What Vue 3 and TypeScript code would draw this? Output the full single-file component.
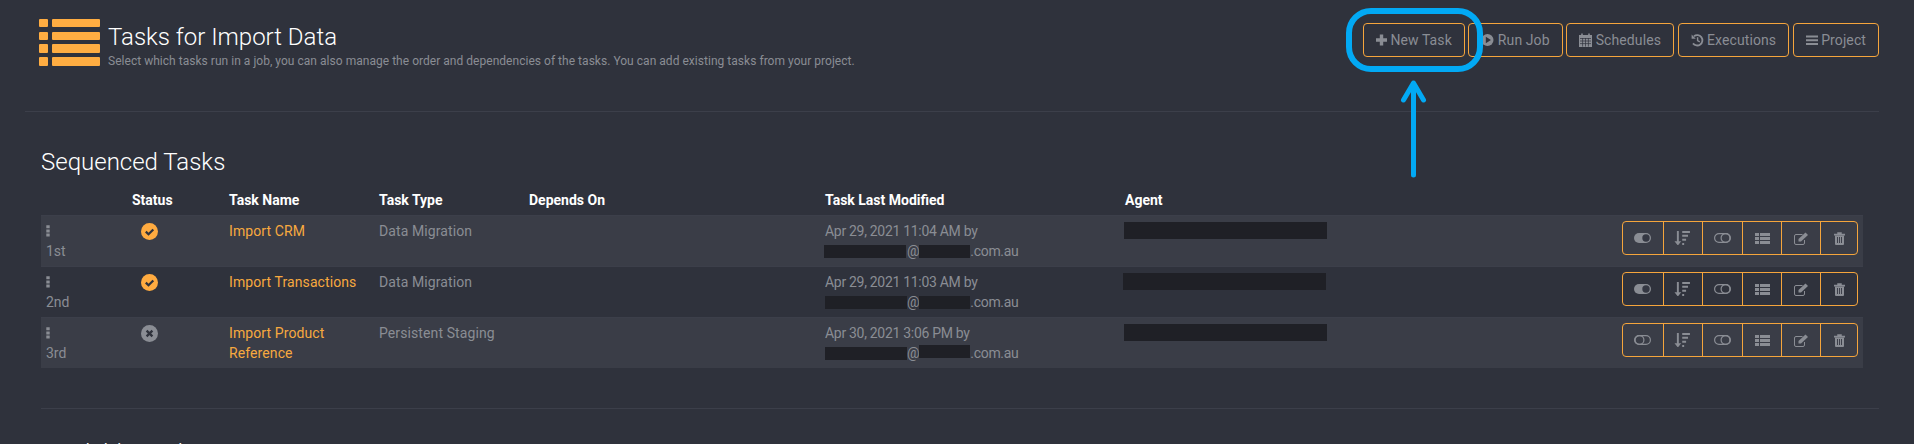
<script setup lang="ts">
interface Task {
  order: string;
  active: boolean;
  name: string;
  type: string;
  modified: string;
  firstShift: number;
  secondShift: number;
  agentShift: number;
}

const buttons = [
  { label: 'New Task', icon: 'plus' },
  { label: 'Run Job', icon: 'play' },
  { label: 'Schedules', icon: 'calendar' },
  { label: 'Executions', icon: 'history' },
  { label: 'Project', icon: 'bars' },
];

const tasks: Task[] = [
  { order: '1st', active: true, name: 'Import CRM', type: 'Data Migration', modified: 'Apr 29, 2021 11:04 AM by', firstShift: -1, secondShift: 0, agentShift: 0 },
  { order: '2nd', active: true, name: 'Import Transactions', type: 'Data Migration', modified: 'Apr 29, 2021 11:03 AM by', firstShift: 0, secondShift: 0, agentShift: -1 },
  { order: '3rd', active: false, name: 'Import Product Reference', type: 'Persistent Staging', modified: 'Apr 30, 2021 3:06 PM by', firstShift: 0, secondShift: -2, agentShift: 0 },
];

const columns = ['', 'Status', 'Task Name', 'Task Type', 'Depends On', 'Task Last Modified', 'Agent', ''];
</script>

<template>
  <div class="page">
    <header class="top">
      <svg class="logo" viewBox="0 0 61 48" aria-hidden="true">
        <g fill="#ffad42">
          <rect x="0" y="1" width="9" height="8" rx="1" />
          <rect x="13" y="1" width="48" height="8" rx="1" />
          <rect x="0" y="14" width="9" height="8" rx="1" />
          <rect x="13" y="14" width="48" height="8" rx="1" />
          <rect x="0" y="26" width="9" height="9" rx="1" />
          <rect x="13" y="26" width="48" height="9" rx="1" />
          <rect x="0" y="39" width="9" height="9" rx="1" />
          <rect x="13" y="39" width="48" height="9" rx="1" />
        </g>
      </svg>
      <div class="heading">
        <h1>Tasks for Import Data</h1>
        <p>Select which tasks run in a job, you can also manage the order and dependencies of the tasks. You can add existing tasks from your project.</p>
      </div>
      <nav class="actions">
        <button v-for="b in buttons" :key="b.label" class="btn" type="button">
          <svg v-if="b.icon === 'plus'" class="ico" viewBox="0 0 11 14"><path d="M3.800 1.600h3.400v3.700H11v3.400H7.200v3.700H3.800V8.700H0V5.300h3.800z" fill="currentColor" /></svg>
          <svg v-else-if="b.icon === 'play'" class="ico" viewBox="0 0 13 14"><circle cx="6.500" cy="7" r="6" fill="currentColor" /><path d="M4.800 3.800v6.400L10 7z" fill="#2f323c" /></svg>
          <svg v-else-if="b.icon === 'calendar'" class="ico" viewBox="0 0 13 14">
            <path d="M0 2h13v12H0z" fill="currentColor" />
            <path d="M1 5.500h11M1 8h11M1 10.600h11M3.600 5v8.600M6.500 5v8.600M9.400 5v8.600" stroke="#2f323c" stroke-width=".7" fill="none" />
            <path d="M3 .5v3M10 .5v3" stroke="currentColor" stroke-width="1.600" fill="none" />
          </svg>
          <svg v-else-if="b.icon === 'history'" class="ico" viewBox="0 0 13 14">
            <path d="M3 3.200A5.200 5.200 0 1 1 2 10.400" stroke="currentColor" stroke-width="1.800" fill="none" />
            <path d="M.6 1.600v4.200h4.200z" fill="currentColor" />
            <path d="M6.600 4.200v3.400l2.200 1.200" stroke="currentColor" stroke-width="1.400" fill="none" />
          </svg>
          <svg v-else class="ico" viewBox="0 0 12 14"><path d="M0 2.400h12v2H0zM0 6.200h12v2H0zM0 10h12v2H0z" fill="currentColor" /></svg>
          <span>{{ b.label }}</span>
        </button>
      </nav>
    </header>

    <section class="section">
      <h2>Sequenced Tasks</h2>
      <div class="grid head">
        <div v-for="(c, i) in columns" :key="i" class="cell">{{ c }}</div>
      </div>
      <div v-for="t in tasks" :key="t.order" class="grid row">
        <div class="cell">
          <svg class="grip" viewBox="0 0 4 12"><path d="M.3.2h3.400v3H.3zM.3 4.400h3.400v3H.3zM.3 8.600h3.400v3H.3z" fill="#8a8d94" /></svg>
          <div>{{ t.order }}</div>
        </div>
        <div class="cell">
          <svg class="status" :class="{ on: t.active }" viewBox="0 0 17 17">
            <circle cx="8.500" cy="8.500" r="8.500" fill="currentColor" />
            <path v-if="t.active" d="M4.800 8.600l2.700 2.700 4.800-4.900" stroke="#2f323c" stroke-width="2.200" fill="none" />
            <path v-else d="M5.600 5.600l5.800 5.800M11.400 5.600l-5.800 5.800" stroke="#2f323c" stroke-width="2.300" fill="none" />
          </svg>
        </div>
        <div class="cell name">{{ t.name }}</div>
        <div class="cell kind">{{ t.type }}</div>
        <div class="cell"></div>
        <div class="cell modified">
          {{ t.modified }}<br />
          <span class="mask first" :style="{ transform: `translateX(${t.firstShift}px)` }"></span>@<span class="mask second" :style="{ transform: `translateY(${t.secondShift}px)` }"></span>.com.au
        </div>
        <div class="cell">
          <div class="mask agent" :style="{ transform: `translateX(${t.agentShift}px)` }"></div>
        </div>
        <div class="cell tools">
          <div class="group">
            <button class="tool w41" type="button">
              <svg v-if="t.active" class="tico" viewBox="0 0 17 10"><rect x="0" y="0" width="17" height="10" rx="5" fill="currentColor" /><circle cx="12" cy="5" r="3.700" fill="#343742" /></svg>
              <svg v-else class="tico" viewBox="0 0 17 10"><rect x=".6" y=".6" width="15.800" height="8.800" rx="4.400" fill="none" stroke="currentColor" stroke-width="1.200" /><circle cx="5.500" cy="5" r="4.400" fill="none" stroke="currentColor" stroke-width="1.200" /></svg>
            </button>
            <button class="tool w39" type="button">
              <svg class="tico sort" viewBox="0 0 17 15"><path d="M3 0h2v10.500h2.500L4 15 .5 10.500H3z" fill="currentColor" /><path d="M8.500 0h8v2h-8zM8.500 4h6v2h-6zM8.500 8h4v2h-4zM8.500 12.500h2v2h-2z" fill="currentColor" /></svg>
            </button>
            <button class="tool w41" type="button">
              <svg class="tico" viewBox="0 0 17 10"><rect x=".6" y=".6" width="15.800" height="8.800" rx="4.400" fill="none" stroke="currentColor" stroke-width="1.200" /><circle cx="11.500" cy="5" r="4.400" fill="none" stroke="currentColor" stroke-width="1.200" /></svg>
            </button>
            <button class="tool w39" type="button">
              <svg class="tico list" viewBox="0 0 15 11"><path d="M0 0h4v3H0zM5 0h10v3H5zM0 4h4v3H0zM5 4h10v3H5zM0 8h4v3H0zM5 8h10v3H5z" fill="currentColor" /></svg>
            </button>
            <button class="tool w39" type="button">
              <svg class="tico edit" viewBox="0 0 15 13"><path d="M10 7.500v3a1.500 1.500 0 0 1-1.500 1.500h-7A1.500 1.500 0 0 1 0 10.500v-7A1.500 1.500 0 0 1 1.500 2H8" transform="translate(.5 .5)" fill="none" stroke="currentColor" stroke-width="1" /><path d="M4.500 7l7-6.500 2.500 2.500-7 6.500H4.500z" fill="currentColor" /></svg>
            </button>
            <button class="tool last" type="button">
              <svg class="tico edit" viewBox="0 0 11 13"><path d="M0 2h11v1.200H0zM3.500 2V.5h4V2" fill="currentColor" stroke="currentColor" stroke-width=".5" /><path d="M1 3.500h9V12a1 1 0 0 1-1 1H2a1 1 0 0 1-1-1z" fill="currentColor" /><path d="M3.500 5v6M5.500 5v6M7.500 5v6" stroke="#343742" stroke-width=".9" /></svg>
            </button>
          </div>
        </div>
      </div>
    </section>

    <section class="section next">
      <h2>Available Tasks</h2>
    </section>

    <svg class="callout" viewBox="0 0 1914 444" aria-hidden="true">
      <rect x="1349" y="11" width="131" height="58" rx="22" fill="none" stroke="#02a9f4" stroke-width="6" />
      <path d="M1413.500 175V84M1403.500 100l10-17 10 17" fill="none" stroke="#02a9f4" stroke-width="5" stroke-linecap="round" stroke-linejoin="round" />
    </svg>
  </div>
</template>

<style>
html, body {
  margin: 0;
  background: #2f323c;
}
</style>

<style scoped>
.page {
  position: relative;
  height: 444px;
  overflow: hidden;
  box-sizing: border-box;
  padding: 0 35px 0 25px;
  background: #2f323c;
  font-family: Roboto, "Liberation Sans", sans-serif;
  font-size: 14px;
  line-height: 20px;
  color: #8a8d94;
}
.top {
  display: flex;
  align-items: flex-start;
  box-sizing: border-box;
  border-bottom: 1px solid #3c3f4a;
  height: 112px;
}
.logo {
  width: 61px;
  height: 48px;
  margin: 18px 8px 0 14px;
  flex: none;
}
.heading {
  flex: 1;
  padding-top: 22px;
}
h1 {
  margin: 0;
  font-size: 24px;
  line-height: 30px;
  font-weight: 300;
  color: #fff;
}
.heading p {
  margin: 1px 0 0;
  font-size: 12px;
  line-height: 16px;
  letter-spacing: .03px;
  color: #8a8d94;
}
.actions {
  display: flex;
  gap: 3.500px;
  padding-top: 23px;
}
.btn {
  display: flex;
  align-items: center;
  gap: 3.500px;
  height: 34px;
  padding: 0 12px;
  box-sizing: border-box;
  border: 1px solid #f5a53c;
  border-radius: 4px;
  background: transparent;
  color: #8a8d94;
  font: inherit;
  letter-spacing: .1px;
}
.ico {
  height: 14px;
  width: auto;
  flex: none;
}
.section {
  padding: 0 16px;
}
h2 {
  margin: 0;
  font-size: 24px;
  line-height: 28px;
  font-weight: 300;
  color: #fff;
}
.section:not(.next) h2 {
  margin-top: 36px;
}
.grid {
  display: grid;
  grid-template-columns: 86px 97px 150px 150px 296px 300px 300px 1fr;
}
.head {
  height: 20px;
  margin-top: 14px;
  padding-bottom: 5px;
  align-items: center;
  font-size: 14px;
  font-weight: 700;
  color: #fff;
}
.cell {
  padding: 0 5px;
  min-width: 0;
}
.row {
  box-sizing: border-box;
  height: 51px;
  padding-top: 5px;
  border-top: 1px solid #3c3f4a;
}
.row:nth-of-type(even) {
  background: #3a3d47;
}
.grip {
  display: block;
  width: 4px;
  height: 12px;
  margin-top: 4px;
  margin-bottom: 4px;
}
.status {
  display: block;
  width: 17px;
  height: 17px;
  margin: 2px 0 0 9px;
  color: #8a8d94;
}
.status.on {
  color: #ffab40;
}
.name {
  color: #f7a93f;
  letter-spacing: .1px;
}
.kind {
  letter-spacing: .1px;
}
.modified {
  letter-spacing: -.3px;
}
.mask {
  background: #1f2026;
}
.first,
.second {
  display: inline-block;
  height: 13px;
  vertical-align: -2px;
}
.first {
  width: 82px;
}
.second {
  width: 51px;
}
.agent {
  width: 203px;
  height: 17px;
  margin-left: -1px;
  margin-top: 1px;
}
.tools {
  display: flex;
  justify-content: flex-end;
  padding-right: 5px;
}
.group {
  display: flex;
  height: 34px;
  box-sizing: border-box;
  border: 1px solid #f5a53c;
  border-radius: 4px;
}
.tool {
  display: flex;
  align-items: center;
  justify-content: center;
  box-sizing: border-box;
  padding: 0;
  height: 100%;
  border: 0;
  border-right: 1px solid #f5a53c;
  background: transparent;
  color: #8a8d94;
}
.tool.w41 {
  width: 40.500px;
}
.tool.w39 {
  width: 39px;
}
.tool.last {
  width: 36px;
  border-right: 0;
}
.tico {
  height: 10px;
  width: auto;
}
.tico.sort {
  height: 14.500px;
}
.tico.list {
  height: 11px;
}
.tico.edit {
  height: 13px;
}
.next {
  margin-top: 40px;
  border-top: 1px solid #3c3f4a;
  margin-left: 16px;
  margin-right: 0;
  padding: 30px 0 0;
}
.callout {
  position: absolute;
  left: 0;
  top: 0;
  width: 1914px;
  height: 444px;
  pointer-events: none;
}
</style>
